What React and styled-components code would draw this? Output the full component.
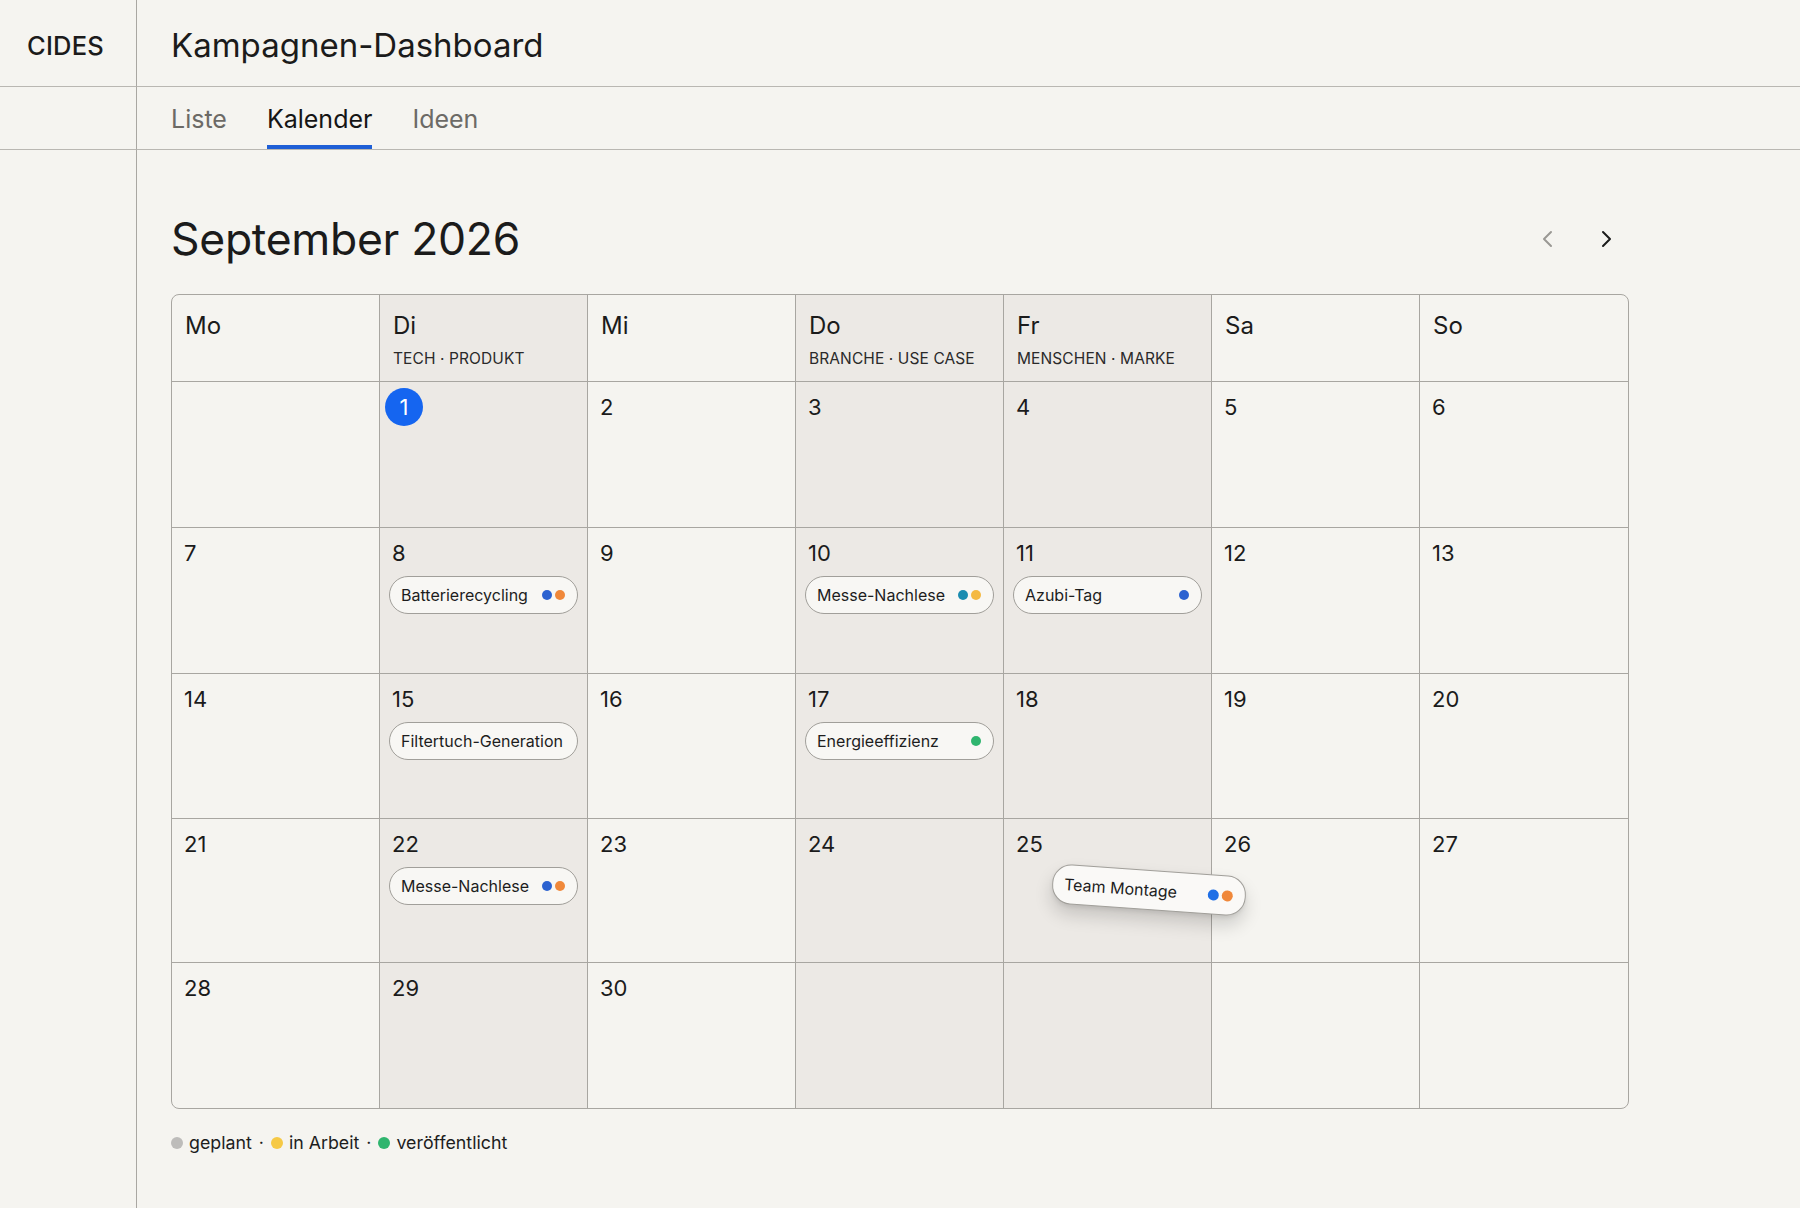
import React from "react";
import styled, { createGlobalStyle } from "styled-components";

const GlobalStyle = createGlobalStyle`
  html, body {
    margin: 0;
    background: #f5f4f0;
  }
  body {
    font-family: Inter, "Noto Sans", sans-serif;
    color: #1b1b1b;
    -webkit-font-smoothing: antialiased;
  }
`;

const DOT = {
  blue: "#2c62d0",
  brightBlue: "#1f6fe6",
  orange: "#f0883a",
  teal: "#1b8cb0",
  yellow: "#f4b942",
  green: "#2fb56e",
  grey: "#bdbcba",
  legendYellow: "#f6c945",
};

const Shell = styled.div`
  display: grid;
  grid-template-columns: 137px 1fr;
  grid-template-rows: 87px 63px 1fr;
  min-height: 100vh;
`;

const Brand = styled.div`
  display: flex;
  align-items: center;
  padding: 4px 0 0 27px;
  font-size: 25.5px;
  font-weight: 500;
  letter-spacing: 0.2px;
  border-right: 1px solid #a9a7a2;
  border-bottom: 1px solid #b9b7b2;
`;

const Header = styled.div`
  display: flex;
  align-items: center;
  padding: 4px 0 0 34px;
  font-size: 33px;
  font-weight: 400;
  border-bottom: 1px solid #b9b7b2;
`;

const SideFill = styled.div`
  border-right: 1px solid #a9a7a2;
  border-bottom: ${({ $ruled }) => ($ruled ? "1px solid #b9b7b2" : "none")};
`;

const Tabs = styled.nav`
  display: flex;
  gap: 40px;
  padding-left: 34px;
  border-bottom: 1px solid #b9b7b2;
`;

const Tab = styled.div`
  display: flex;
  align-items: center;
  font-size: 25px;
  color: ${({ $active }) => ($active ? "#151515" : "#6c6a66")};
  box-shadow: ${({ $active }) => ($active ? "inset 0 -4px 0 #1f5fd6" : "none")};
  padding-top: 2px;
`;

const Main = styled.main`
  padding: 62px 171px 40px 34px;
`;

const TitleRow = styled.div`
  display: flex;
  align-items: center;
  justify-content: space-between;
  height: 53px;
  margin-bottom: 29px;
`;

const Month = styled.h1`
  margin: 0;
  font-size: 44.5px;
  font-weight: 400;
  letter-spacing: -0.3px;
`;

const Nav = styled.div`
  display: flex;
  gap: 36px;
  padding-right: 12px;
`;

const NavButton = styled.button`
  appearance: none;
  border: 0;
  background: none;
  padding: 0;
  width: 22px;
  height: 22px;
  color: ${({ $muted }) => ($muted ? "#9a9894" : "#1b1b1b")};
  cursor: pointer;
`;

const Grid = styled.div`
  display: grid;
  grid-template-columns: repeat(7, 1fr);
  grid-template-rows: 87px 146px 146px 145px 144px 145px;
  border: 1px solid #a8a6a1;
  border-radius: 8px;
  overflow: hidden;
`;

const HeadCell = styled.div`
  padding: 14px 13px 0;
  background: ${({ $shaded }) => ($shaded ? "#ece9e5" : "transparent")};
  border-right: ${({ $last }) => ($last ? "none" : "1px solid #a8a6a1")};
  border-bottom: 1px solid #a8a6a1;
`;

const DayName = styled.div`
  font-size: 24px;
  line-height: 34px;
`;

const Theme = styled.div`
  margin-top: 6px;
  font-size: 15.5px;
  letter-spacing: 0.1px;
  color: #2a2a2a;
`;

const DayCell = styled.div`
  position: relative;
  padding: 6px 9px 0 9px;
  background: ${({ $shaded }) => ($shaded ? "#ece9e5" : "transparent")};
  border-right: ${({ $last }) => ($last ? "none" : "1px solid #a8a6a1")};
  border-bottom: ${({ $bottom }) => ($bottom ? "none" : "1px solid #a8a6a1")};
`;

const DayNum = styled.div`
  display: flex;
  align-items: center;
  width: ${({ $today }) => ($today ? "38px" : "auto")};
  height: 38px;
  margin-left: ${({ $today }) => ($today ? "-4px" : "3px")};
  justify-content: ${({ $today }) => ($today ? "center" : "flex-start")};
  border-radius: 50%;
  background: ${({ $today }) => ($today ? "#1565f0" : "transparent")};
  color: ${({ $today }) => ($today ? "#fff" : "#1b1b1b")};
  font-size: 22px;
`;

const Chip = styled.div`
  display: flex;
  align-items: center;
  justify-content: space-between;
  height: 36px;
  margin-top: 4px;
  padding: 0 12px 0 11px;
  border: 1px solid #a19f9a;
  border-radius: 19px;
  background: #f8f7f4;
  font-size: 16px;
  color: #1d1d1d;
  white-space: nowrap;
`;

/* chip that is being dragged from one day to the next */
const DraggedChip = styled(Chip)`
  position: absolute;
  z-index: 3;
  left: 48px;
  top: 51px;
  width: 169px;
  margin: 0;
  height: 38px;
  font-size: 16px;
  background: #faf9f7;
  transform: rotate(4deg);
  box-shadow: 0 10px 18px rgba(0, 0, 0, 0.16), 0 2px 4px rgba(0, 0, 0, 0.08);
`;

const Dots = styled.span`
  display: flex;
  gap: 3px;
`;

const Dot = styled.span`
  width: ${({ $size }) => $size || 10}px;
  height: ${({ $size }) => $size || 10}px;
  border-radius: 50%;
  background: ${({ $color }) => $color};
`;

const Legend = styled.div`
  display: flex;
  align-items: center;
  gap: 6px;
  margin-top: 23px;
  font-size: 17.8px;
  color: #1d1d1d;
`;

const Sep = styled.span`
  margin: 0 1px;
`;

const Chevron = ({ dir }) => (
  <svg width="22" height="22" viewBox="0 0 22 22" fill="none">
    <polyline
      points={dir === "left" ? "14,4 7,11 14,18" : "8,4 15,11 8,18"}
      stroke="currentColor"
      strokeWidth="2"
      strokeLinecap="round"
      strokeLinejoin="round"
    />
  </svg>
);

const days = [
  { name: "Mo" },
  { name: "Di", theme: "TECH · PRODUKT" },
  { name: "Mi" },
  { name: "Do", theme: "BRANCHE · USE CASE" },
  { name: "Fr", theme: "MENSCHEN · MARKE" },
  { name: "Sa" },
  { name: "So" },
];

const weeks = [
  [null, 1, 2, 3, 4, 5, 6],
  [7, 8, 9, 10, 11, 12, 13],
  [14, 15, 16, 17, 18, 19, 20],
  [21, 22, 23, 24, 25, 26, 27],
  [28, 29, 30, null, null, null, null],
];

const events = {
  8: { title: "Batterierecycling", dots: [DOT.blue, DOT.orange] },
  10: { title: "Messe-Nachlese", dots: [DOT.teal, DOT.yellow] },
  11: { title: "Azubi-Tag", dots: [DOT.blue] },
  15: { title: "Filtertuch-Generation", dots: [] },
  17: { title: "Energieeffizienz", dots: [DOT.green] },
  22: { title: "Messe-Nachlese", dots: [DOT.blue, DOT.orange] },
};

const dragging = { day: 25, title: "Team Montage", dots: [DOT.brightBlue, DOT.orange] };

export default function App() {
  return (
    <>
      <GlobalStyle />
      <Shell>
        <Brand>CIDES</Brand>
        <Header>Kampagnen-Dashboard</Header>
        <SideFill $ruled />
        <Tabs>
          <Tab>Liste</Tab>
          <Tab $active>Kalender</Tab>
          <Tab>Ideen</Tab>
        </Tabs>
        <SideFill />
        <Main>
          <TitleRow>
            <Month>September 2026</Month>
            <Nav>
              <NavButton $muted aria-label="Vorheriger Monat">
                <Chevron dir="left" />
              </NavButton>
              <NavButton aria-label="Nächster Monat">
                <Chevron dir="right" />
              </NavButton>
            </Nav>
          </TitleRow>

          <Grid>
            {days.map((d, i) => (
              <HeadCell key={d.name} $shaded={!!d.theme} $last={i === 6}>
                <DayName>{d.name}</DayName>
                {d.theme && <Theme>{d.theme}</Theme>}
              </HeadCell>
            ))}
            {weeks.map((week, w) =>
              week.map((n, i) => {
                const ev = n && events[n];
                return (
                  <DayCell
                    key={`${w}-${i}`}
                    $shaded={!!days[i].theme}
                    $last={i === 6}
                    $bottom={w === weeks.length - 1}
                  >
                    {n && <DayNum $today={n === 1}>{n}</DayNum>}
                    {ev && (
                      <Chip>
                        <span>{ev.title}</span>
                        {ev.dots.length > 0 && (
                          <Dots>
                            {ev.dots.map((c, k) => (
                              <Dot key={k} $color={c} />
                            ))}
                          </Dots>
                        )}
                      </Chip>
                    )}
                    {n === dragging.day && (
                      <DraggedChip>
                        <span>{dragging.title}</span>
                        <Dots>
                          {dragging.dots.map((c, k) => (
                            <Dot key={k} $color={c} $size={11} />
                          ))}
                        </Dots>
                      </DraggedChip>
                    )}
                  </DayCell>
                );
              })
            )}
          </Grid>

          <Legend>
            <Dot $color={DOT.grey} $size={12} />
            <span>geplant</span>
            <Sep>·</Sep>
            <Dot $color={DOT.legendYellow} $size={12} />
            <span>in Arbeit</span>
            <Sep>·</Sep>
            <Dot $color={DOT.green} $size={12} />
            <span>veröffentlicht</span>
          </Legend>
        </Main>
      </Shell>
    </>
  );
}
